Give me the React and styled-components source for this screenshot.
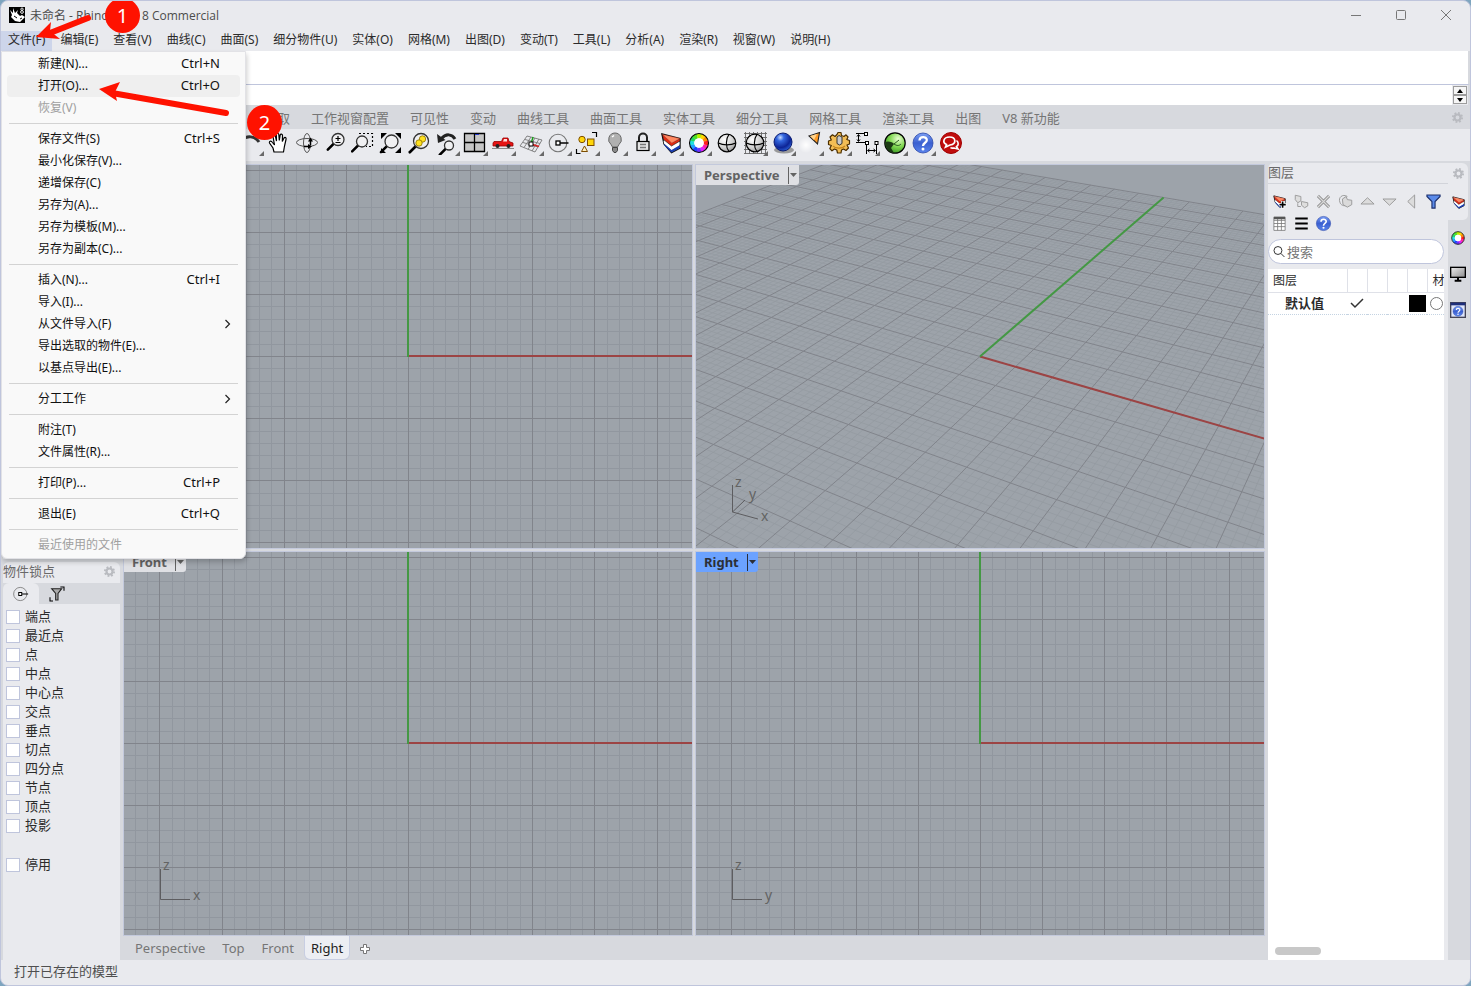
import React from 'react';
import styled, { createGlobalStyle } from 'styled-components';

const GlobalStyle = createGlobalStyle`
  * {
    box-sizing: border-box;
  }
  body {
    margin: 0;
    background: #7ea5bf;
    font-family: "Noto Sans", "Noto Sans CJK SC", sans-serif;
    font-size: 12px;
    color: #2b2b2b;
  }
  button, input {
    font: inherit;
    color: inherit;
  }
  button {
    border: 0;
    padding: 0;
    background: none;
  }
  svg {
    display: block;
  }
`;

const Window = styled.div`
  position: relative;
  display: flex;
  flex-direction: column;
  min-height: 100vh;
  border: 1px solid #bfc5dc;
  border-radius: 8px;
  background: #e9eaee;
  overflow: hidden;
`;

const TitleBar = styled.header`
  display: flex;
  align-items: center;
  height: 30px;
  padding: 0 8px 2px;
  gap: 5px;
  color: #4c4c4c;
`;

const Title = styled.h1`
  flex: 1;
  margin: 0;
  font-family: "Open Sans", "Noto Sans CJK SC", sans-serif;
  font-size: 12px;
  font-weight: 400;
`;

const WindowButtons = styled.div`
  display: flex;
  gap: 29px;
  padding-right: 8px;
`;

const WindowButton = styled.button`
  width: 16px;
  height: 16px;
`;

const MenuBar = styled.nav`
  display: flex;
  gap: 1px;
  height: 20px;
`;

const MenuTitle = styled.button`
  height: 20px;
  padding: 0 7px 2px;
  line-height: 16px;
  white-space: nowrap;
  background: ${props => props.$open ? '#cdd5ea' : 'none'};
`;

const History = styled.div`
  height: 34px;
  background: white;
  border-bottom: 1px solid #bfc5dc;
  border-right: 2px solid #d7d9de;
`;

const Prompt = styled.div`
  display: flex;
  height: 20px;
  background: white;
  border-right: 2px solid #d7d9de;
`;

const PromptInput = styled.input`
  flex: 1;
  border: 0;
  outline: 0;
  padding: 0 4px;
`;

const Spinner = styled.div`
  display: flex;
  flex-direction: column;
  width: 16px;
  padding: 1px;
  background: #e9eaee;
`;

const SpinButton = styled.button`
  display: flex;
  align-items: center;
  justify-content: center;
  height: 9px;
  border: 1px solid #9c9c9c;
  background: #f6f6f6;
`;

const ToolTabs = styled.div`
  display: flex;
  align-items: center;
  gap: 21px;
  height: 24px;
  padding: 0 6px 0 263px;
  background: #d7d9de;
  color: #757575;
  font-size: 13px;
`;

const ToolTab = styled.button`
  line-height: 20px;
  padding-top: 2px;
  white-space: nowrap;
`;

const Push = styled.span`
  margin-left: auto;
`;

const Toolbar = styled.div`
  display: flex;
  height: 32px;
  padding: 0 0 4px 236px;
`;

const Tool = styled.button`
  position: relative;
  display: flex;
  align-items: center;
  justify-content: center;
  flex: none;
  width: 28px;
  height: 28px;
  &::after {
    content: "";
    display: ${props => props.$more ? 'block' : 'none'};
    position: absolute;
    right: 1px;
    bottom: 1px;
    border-left: 5px solid transparent;
    border-bottom: 5px solid #696969;
  }
`;

const Main = styled.main`
  display: flex;
  flex: 1;
  background: #d7d9de;
`;

const LeftDock = styled.aside`
  display: grid;
  grid-template-rows: 1fr 1fr;
  gap: 3px;
  width: 119px;
  padding-left: 2px;
`;

const DockPanel = styled.section`
  border-radius: 6px 6px 0 0;
  background: #e9eaee;
  overflow: hidden;
`;

const PanelTitle = styled.header`
  display: flex;
  align-items: center;
  justify-content: space-between;
  height: 21px;
  padding: 0 4px 2px 0;
  font-size: 13px;
  line-height: 19px;
  color: #696969;
`;

const PanelTabs = styled.div`
  display: flex;
  height: 21px;
  background: #d7d9de;
`;

const PanelTab = styled.button`
  display: flex;
  align-items: center;
  justify-content: center;
  width: 36px;
  border-radius: 6px 6px 0 0;
  background: ${props => props.$active ? '#e9eaee' : 'none'};
`;

const SnapList = styled.div`
  display: flex;
  flex-direction: column;
  padding: 3px;
`;

const Snap = styled.label`
  display: flex;
  align-items: center;
  gap: 5px;
  height: 19px;
  margin-top: ${props => props.$apart ? '20px' : '0'};
  font-size: 13px;
  line-height: 19px;
`;

const Check = styled.input`
  appearance: none;
  width: 14px;
  height: 14px;
  margin: 0;
  border: 1px solid #bfc5dc;
  background: white;
`;

const ViewArea = styled.div`
  display: flex;
  flex-direction: column;
  flex: 1;
  min-width: 0;
  padding-top: 4px;
`;

const Views = styled.div`
  display: grid;
  flex: 1;
  grid-template-columns: 1fr 1fr;
  grid-template-rows: 1fr 1fr;
  gap: 4px;
  padding: 0 4px;
`;

const View = styled.section`
  position: relative;
  min-height: 240px;
  background: #9da3aa;
  outline: 1px solid #c3c9dc;
  overflow: hidden;
`;

const Canvas = styled.svg`
  position: absolute;
  inset: 0;
  width: 100%;
  height: 100%;
`;

const ViewLabel = styled.button`
  position: absolute;
  top: 0;
  left: 0;
  display: flex;
  align-items: center;
  height: 20px;
  padding: 0 1px 0 8px;
  gap: 8px;
  border-radius: 0 0 3px 0;
  font-size: 13px;
  font-weight: 700;
  line-height: 20px;
  color: ${props => props.$active ? '#2b2f38' : '#636363'};
  background: ${props => props.$active ? '#6ba2ff' : '#dfe0e4'};
`;

const Caret = styled.span`
  display: flex;
  align-items: center;
  height: 17px;
  border-left: 1px solid currentColor;
`;

const ViewTabs = styled.div`
  display: flex;
  height: 25px;
  padding: 1px 9px;
  font-size: 13px;
  color: #757575;
`;

const ViewTab = styled.button`
  height: 23px;
  padding: 2px 6px 0;
  margin-right: 5px;
  line-height: 21px;
  border-radius: 0 0 5px 5px;
  color: ${props => props.$active ? '#222222' : 'inherit'};
  background: ${props => props.$active ? '#eceef3' : 'none'};
  box-shadow: ${props => props.$active ? '0 0 0 1px #c8cee2' : 'none'};
`;

const RightDock = styled.aside`
  display: flex;
  width: 202px;
  padding: 2px 2px 0 0;
`;

const LayerPanel = styled.section`
  display: flex;
  flex-direction: column;
  flex: 1;
  min-width: 0;
  padding-right: 4px;
  background: #e9eaee;
  border-top-left-radius: 6px;
`;

const LayerTitle = styled(PanelTitle)`
  margin-right: -4px;
  border-bottom: 1px solid #d2d4da;
`;

const LayerTools = styled.div`
  display: flex;
  flex-wrap: wrap;
  padding: 6px 0 3px;
`;

const LayerTool = styled.button`
  display: flex;
  align-items: center;
  justify-content: center;
  width: 22px;
  height: 22px;
`;

const Search = styled.label`
  display: flex;
  align-items: center;
  gap: 2px;
  height: 25px;
  margin: 2px 0 5px;
  padding: 0 4px;
  border: 1px solid #bfc5dc;
  border-radius: 13px;
  background: white;
`;

const SearchInput = styled.input`
  width: 100%;
  border: 0;
  outline: 0;
  padding: 0;
  font-size: 13px;
  background: none;
  &::placeholder {
    color: #757575;
  }
`;

const LayerList = styled.div`
  display: flex;
  flex-direction: column;
  justify-content: space-between;
  flex: 1;
  background: white;
  overflow: hidden;
`;

const LayerTable = styled.table`
  width: 100%;
  table-layout: fixed;
  border-collapse: collapse;
  th {
    height: 23px;
    padding: 0 0 0 5px;
    font-weight: 400;
    text-align: left;
    white-space: nowrap;
    overflow: hidden;
    border-right: 1px solid #dfe1e8;
    border-bottom: 1px solid #dfe1e8;
  }
  th:last-child {
    border-right: 0;
  }
  td {
    height: 22px;
    padding: 0;
    border-bottom: 1px dotted #c4d3e2;
  }
`;

const LayerName = styled.td`
  && {
    padding-left: 17px;
    font-size: 13px;
    font-weight: 700;
    line-height: 20px;
  }
`;

const Swatch = styled.span`
  display: block;
  width: 17px;
  height: 17px;
  margin-left: 2px;
  background: black;
`;

const Material = styled.span`
  display: block;
  width: 13px;
  height: 13px;
  margin-left: 3px;
  border: 1px solid #777777;
  border-radius: 50%;
`;

const Thumb = styled.div`
  width: 46px;
  height: 8px;
  margin: 0 0 5px 7px;
  border-radius: 4px;
  background: #c8c8c8;
`;

const SideTabs = styled.div`
  display: flex;
  flex-direction: column;
  width: 20px;
`;

const SideTab = styled.button`
  display: flex;
  align-items: center;
  justify-content: center;
  height: 36px;
  background: ${props => props.$active ? '#e9eaee' : 'none'};
  border-radius: ${props => props.$active ? '0 0 5px 0' : '0'};
`;

const SideHead = styled.div`
  display: flex;
  align-items: center;
  justify-content: center;
  height: 21px;
  border-top-right-radius: 6px;
  background: #e9eaee;
`;

const StatusBar = styled.footer`
  height: 25px;
  padding: 0 13px;
  font-size: 13px;
  line-height: 22px;
  color: #4f4f4f;
`;

const Menu = styled.div`
  position: absolute;
  top: 50px;
  left: 0;
  width: 245px;
  padding: 1px 5px 2px;
  border: 1px solid #e2e2e6;
  border-radius: 0 0 6px 6px;
  background: #f9f9f9;
  box-shadow: 1px 3px 5px rgba(0, 0, 0, 0.2);
`;

const MenuItem = styled.button`
  display: flex;
  align-items: center;
  width: 100%;
  height: 22px;
  padding: 0 9px 0 31px;
  border-radius: 4px;
  line-height: 22px;
  text-align: left;
  color: ${props => props.$disabled ? '#a0a0a0' : '#111111'};
  background: ${props => props.$hover ? '#efefef' : 'none'};
`;

const MenuText = styled.span`
  flex: 1;
`;

const Shortcut = styled.kbd`
  height: 22px;
  padding-right: 11px;
  font-family: inherit;
  font-size: 13px;
  line-height: 20px;
`;

const Separator = styled.hr`
  height: 1px;
  margin: 4px 2px;
  border: 0;
  background: #d3d3d3;
`;

const Notes = styled.svg`
  position: absolute;
  top: -1px;
  left: -1px;
  pointer-events: none;
`;

const Badge = styled.span`
  position: absolute;
  left: ${props => props.$x}px;
  top: ${props => props.$y}px;
  width: 35px;
  height: 35px;
  border-radius: 50%;
  background: #ff1200;
  color: white;
  font-size: 20px;
  line-height: 36px;
  text-align: center;
`;

const menus = ['文件(F)', '编辑(E)', '查看(V)', '曲线(C)', '曲面(S)', '细分物件(U)', '实体(O)', '网格(M)', '出图(D)', '变动(T)', '工具(L)', '分析(A)', '渲染(R)', '视窗(W)', '说明(H)'];

const fileMenu = [
  { text: '新建(N)...', keys: 'Ctrl+N' },
  { text: '打开(O)...', keys: 'Ctrl+O', hover: true },
  { text: '恢复(V)', disabled: true },
  null,
  { text: '保存文件(S)', keys: 'Ctrl+S' },
  { text: '最小化保存(V)...' },
  { text: '递增保存(C)' },
  { text: '另存为(A)...' },
  { text: '另存为模板(M)...' },
  { text: '另存为副本(C)...' },
  null,
  { text: '插入(N)...', keys: 'Ctrl+I' },
  { text: '导入(I)...' },
  { text: '从文件导入(F)', sub: true },
  { text: '导出选取的物件(E)...' },
  { text: '以基点导出(E)...' },
  null,
  { text: '分工工作', sub: true },
  null,
  { text: '附注(T)' },
  { text: '文件属性(R)...' },
  null,
  { text: '打印(P)...', keys: 'Ctrl+P' },
  null,
  { text: '退出(E)', keys: 'Ctrl+Q' },
  null,
  { text: '最近使用的文件', disabled: true },
];

const toolTabs = ['选取', '工作视窗配置', '可见性', '变动', '曲线工具', '曲面工具', '实体工具', '细分工具', '网格工具', '渲染工具', '出图', 'V8 新功能'];

const snaps = ['端点', '最近点', '点', '中点', '中心点', '交点', '垂点', '切点', '四分点', '节点', '顶点', '投影'];

const wheelColors = ['#ffd800', '#ff8a00', '#ff2020', '#ff20a0', '#e020ff', '#7030ff', '#2040ff', '#20a0ff', '#20e0e0', '#20d860', '#50e020', '#b8f000'];

function Icon({size = 24, box = 24, children}) {
  return <svg width={size} height={size} viewBox={`0 0 ${box} ${box}`} fill="none" stroke="#000" aria-hidden="true">{children}</svg>;
}

function Defs() {
  return (
    <svg width="0" height="0" style={{ position: 'absolute' }} aria-hidden="true">
      <defs>
        <radialGradient id="ballBlue" cx=".35" cy=".25" r=".8"><stop offset="0" stopColor="#c8dcff" /><stop offset=".25" stopColor="#3468e0" /><stop offset=".7" stopColor="#0d2496" /><stop offset="1" stopColor="#2c62d8" /></radialGradient>
        <radialGradient id="ballGreen" cx=".65" cy=".3" r=".8"><stop offset="0" stopColor="#e8ffd0" /><stop offset=".5" stopColor="#7fd650" /><stop offset="1" stopColor="#2c8a1c" /></radialGradient>
        <radialGradient id="ballGray" cx=".35" cy=".3" r=".8"><stop offset="0" stopColor="#ffffff" /><stop offset=".6" stopColor="#d0d0d0" /><stop offset="1" stopColor="#8d8d8d" /></radialGradient>
        <linearGradient id="help" x1="0" y1="0" x2="0" y2="1"><stop offset="0" stopColor="#7da0f4" /><stop offset=".5" stopColor="#3a5fd0" /><stop offset="1" stopColor="#5a84ec" /></linearGradient>
        <linearGradient id="screen" x1="0" y1="0" x2="1" y2="1"><stop offset="0" stopColor="#eeeeee" /><stop offset="1" stopColor="#8c8c8c" /></linearGradient>
        <radialGradient id="glow"><stop offset="0" stopColor="#ffffff" /><stop offset="1" stopColor="#ffffff" stopOpacity="0" /></radialGradient>
      </defs>
    </svg>
  );
}

function Lens({x = 14, y = 10, r = 6}) {
  const k = r * 0.7;
  return (
    <>
      <path d={`M${x - k} ${y + k} L${x - k - 6} ${y + k + 6}`} strokeWidth="2.6" strokeLinecap="round" />
      <circle cx={x} cy={y} r={r} fill="#f0f0f2" stroke="#333" strokeWidth="1.3" />
    </>
  );
}

function Wheel() {
  return wheelColors.map((color, i) => {
    const a = (i * 30 - 75) * Math.PI / 180;
    const b = (i * 30 - 43) * Math.PI / 180;
    return <path key={color} d={`M${12 + 7 * Math.cos(a)} ${12 + 7 * Math.sin(a)} A7 7 0 0 1 ${12 + 7 * Math.cos(b)} ${12 + 7 * Math.sin(b)}`} stroke={color} strokeWidth="4.6" />;
  });
}

const wheel = (
  <>
    <Wheel />
    <circle cx="12" cy="12" r="9.5" strokeWidth="1.1" />
    <circle cx="12" cy="12" r="4.8" fill="#fff" stroke="none" />
  </>
);

const wedge = (
  <>
    <path d="M3 3 L5 13 L12.500 21.500 L21 17 V7.500 Z" fill="#fff" stroke="#111" strokeWidth="1.400" />
    <path d="M5 12 L12.500 19 L21 14 V17 L12.500 21.500 L5.500 14.500 Z" fill="#1b3fb0" stroke="none" />
    <path d="M4.500 9.500 L12.500 16 L20.500 11 V13.500 L12.500 18.500 L5 12.500 Z" fill="#fff" stroke="none" />
    <path d="M3 3 L4.500 8.500 L12.500 15 L21 10 V7.500 L13 11.500 Z" fill="#e22a12" stroke="#111" strokeWidth=".6" />
    <path d="M3.500 3.500 L20.500 7.500 L12.800 12 Z" fill="#ff8a62" stroke="#c43" strokeWidth=".4" />
  </>
);

const helpBall = (
  <>
    <circle cx="12" cy="12" r="10" fill="url(#help)" stroke="#2845a8" strokeWidth=".8" />
    <path d="M8.500 9.500 C8.500 5 15.800 5 15.800 9 C15.800 12 12 11.500 12 15" stroke="#fff" strokeWidth="2.300" />
    <circle cx="12" cy="18" r="1.500" fill="#fff" stroke="none" />
  </>
);

const wireBall = (
  <>
    <circle cx="12" cy="12" r="8.800" fill="url(#ballGray)" strokeWidth="1.200" />
    <path d="M14 3.400 C10.500 8 10.500 16 14 20.600 M3.300 12 C8 14.500 16 14.500 20.700 12" strokeWidth="1.100" />
  </>
);

const snapTarget = (
  <>
    <circle cx="11" cy="12" r="8.800" stroke="#777" strokeWidth="1.100" />
    <path d="M12.500 12 H21.500" strokeWidth="1.400" />
    <rect x="9" y="10" width="4" height="4" fill="#fff" strokeWidth="1.300" />
  </>
);

const gear = (
  <>
    <circle cx="12" cy="12" r="5.500" strokeWidth="4" />
    <circle cx="12" cy="12" r="8.500" strokeWidth="3.500" strokeDasharray="3.340 3.340" />
  </>
);

const cog = 'M10 3.500 L11 1.500 H14 L14.500 4.500 L17 5.500 L19 3.800 L21 6 L19.800 8.500 L22.500 9.500 V13 L20 14 L21.500 17 L19 19.500 L16.500 18 L14.500 19 L14 22 H10.500 L9.800 19 L7.500 18 L5 19.800 L2.800 17.500 L4.300 14.500 L1.500 13.500 V10 L4.300 9 L3 6 L5.500 3.800 L8 5.500 Z';

const tools = [
  { id: '重做', more: true, art: <path d="M3 9 C8 4 16 5 20 11" stroke="#333" strokeWidth="3" /> },
  { id: '平移', art: <path d="M7 21 L6 17 L2.500 12 C2 10 4 9.500 5.500 11.500 L7.500 14 L6 5.500 C6 3.500 8 3.500 8.500 5.500 L9.500 10 L9.300 3.500 C9.500 1.800 11.600 1.800 11.800 3.500 L12.300 9.500 L13.200 4 C13.600 2.500 15.500 2.800 15.500 4.500 L15.300 10.500 L17 7 C18 5.800 19.500 6.600 19 8.500 L17.500 15 L16.500 21 Z" fill="#fff" strokeWidth="1.200" /> },
  { id: '旋转', art: <><ellipse cx="12" cy="11.500" rx="10.500" ry="4" stroke="#555" /><ellipse cx="12" cy="12" rx="3.500" ry="9.500" stroke="#555" /><path d="M9 15.500 H14 M15.500 8 V14" strokeWidth="1.500" /><path d="M17 15.500 l-4 -2.500 v5 Z M15.500 6.500 l-2.500 4 h5 Z" fill="#000" stroke="none" /></> },
  { id: '缩放', art: <><Lens x={15} y={8.5} /><path d="M12.500 7.500 h5 M15 5 v5 M12.500 11.500 h5" strokeWidth="1.200" /></> },
  { id: '框选缩放', art: <><path d="M8 2.500 H21.500 V15.500 H15" strokeDasharray="2 2" strokeWidth="1.200" /><Lens x={11} y={10.5} r={5.500} /></> },
  { id: '缩放至范围', art: <><path d="M2 2 h6 l-6 6 Z M22 2 h-6 l6 6 Z M22 22 h-6 l6 -6 Z M2 22 h5 l-5 -5 Z" fill="#000" stroke="none" /><Lens x={12.5} y={10.5} r={6.500} /></> },
  { id: '缩放至选取', art: <><Lens x={14} y={10} r={7.500} /><circle cx="15.500" cy="8" r="3.200" fill="#ffe11f" stroke="#8c7000" strokeWidth=".8" /><circle cx="12" cy="12" r="3.200" fill="#ffe11f" stroke="#8c7000" strokeWidth=".8" /></> },
  { id: '复原视图', more: true, art: <><Lens x={14} y={14.5} r={4.500} /><path d="M6 8 C11 2 17 3 20 8" strokeWidth="3" stroke="#222" /><path d="M2 3 L3 12 L10.500 9 Z" fill="#222" stroke="none" /></> },
  { id: '四个工作视窗', more: true, art: <><path d="M1.500 2.500 h20 v18 h-20 Z M11.500 2.500 v18 M1.500 11.500 h20" fill="#c6c6c6" strokeWidth="1.300" /><path d="M12 3.500 h4" stroke="#2438c8" /></> },
  { id: '车辆', more: true, art: <><path d="M2 12 L3 10.500 H10.500 L12 7 H17 L18 10.500 L22 12 V15 H2 Z" fill="#e61414" stroke="#9a0000" strokeWidth=".8" /><path d="M12 10.500 L13 8 H16 V10.500 Z" fill="#ffe0e0" stroke="none" /><circle cx="6.500" cy="15" r="2" fill="#222" stroke="none" /><circle cx="17.500" cy="15" r="2" fill="#222" stroke="none" /><path d="M1 17.500 h22" stroke="#888" /></> },
  { id: '工作平面', more: true, art: <><path d="M8 5 L23 9 L16 21 L1 15 Z M12 6 L5 16.500 M16 7 L9 18.500 M20 8 L13 20 M6 8.500 L21 12.500 M4 11.500 L19 16" stroke="#777" strokeWidth=".9" /><path d="M12 13 L14 6" stroke="#19a019" strokeWidth="1.500" /><path d="M12 13 L20 15.500" stroke="#d81f1f" strokeWidth="1.600" /><rect x="10" y="11" width="4" height="4" fill="#fff" /></> },
  { id: '物件锁点', more: true, art: snapTarget },
  { id: '选取物件', more: true, art: <><path d="M17 1.500 h4.500 V6 M1.500 18 v4.500 h4" strokeWidth="1.200" /><g fill="#ffd60a" stroke="#7d4c00"><circle cx="7" cy="8.500" r="3.200" /><rect x="12.500" y="8" width="6.500" height="6.500" /><path d="M9.500 15 l3 5.500 h-6 Z" fill="#fff1c0" /></g></> },
  { id: '隐藏物件', more: true, art: <><path d="M12 2 a6.500 6.500 0 0 1 4 11.500 L14.500 16 h-5 L8 13.500 A6.500 6.500 0 0 1 12 2 Z" fill="#b0b0b0" stroke="#666" /><path d="M9.500 16.500 h5 v3 l-1.500 2 h-2 l-1.500 -2 Z" fill="#888" stroke="#444" /><path d="M9 6 l2 -1.500" stroke="#fff" strokeWidth="1.500" /></> },
  { id: '锁定物件', more: true, art: <><path d="M8 11 V6.500 a4 4 0 0 1 8 0 V11" strokeWidth="2" stroke="#222" /><rect x="6" y="10.500" width="12" height="9" fill="#e4e4e4" strokeWidth="1.200" /><path d="M9 13.500 h6 M9 16.500 h6" stroke="#777" strokeWidth="1.500" /></> },
  { id: '图层', more: true, art: wedge },
  { id: '颜色', more: true, art: wheel },
  { id: '着色', art: wireBall },
  { id: '半透明', more: true, art: <><path d="M2.500 1 v22 M6.500 1 v22 M10.500 1 v22 M14.500 1 v22 M18.500 1 v22 M22.500 1 v22 M1 2.500 h23 M1 6.500 h23 M1 10.500 h23 M1 14.500 h23 M1 18.500 h23 M1 22.500 h23" stroke="#666" strokeWidth=".9" />{wireBall}</> },
  { id: '渲染', more: true, art: <><ellipse cx="13" cy="19" rx="10" ry="3.500" fill="#9a9a9a" stroke="none" /><circle cx="12" cy="11" r="9" fill="url(#ballBlue)" stroke="#0b1c70" /></> },
  { id: '聚光灯', more: true, art: <><circle cx="7" cy="14" r="8" fill="url(#glow)" stroke="none" /><path d="M10 5 L20.500 1.500 L18.500 13 Z" fill="#ff9a24" stroke="#222" strokeWidth="1.100" /><path d="M11 5 L18 3 L15 9 Z" fill="#ffd38c" stroke="none" /></> },
  { id: '选项', more: true, art: <><path d={cog} fill="#f2bd55" stroke="#4b2e00" strokeWidth="1.200" strokeLinejoin="round" /><path d="M10 6 L12 4.500 L15 6 V12.500 L12.500 14 L10 12.500 Z" fill="#c9c9c9" stroke="#333" /><path d="M6 15 C8 17.500 15 18 18 15" stroke="#c58418" strokeWidth="1.200" /></> },
  { id: '尺寸标注', more: true, art: <><path d="M1 2.500 h8 M1 11.500 h9 M3.500 4 v6 M2 5.500 l1.500 -2 l1.500 2 M2 8.500 l1.500 2 l1.500 -2 M11.500 14 v9 M21.500 14 v9 M13 19.500 h7 M14.500 18 l-2 1.500 l2 1.500 M18.500 18 l2 1.500 l-2 1.500" /><g fill="#fff"><rect x="9.500" y="1.500" width="3" height="3" /><rect x="10.500" y="10.500" width="3" height="3" /><rect x="20" y="10.500" width="3" height="3" /></g></> },
  { id: '动画', more: true, art: <><circle cx="12" cy="12" r="10.200" fill="url(#ballGreen)" strokeWidth="1.200" /><path d="M2 11 C5 9.500 10 11 11 13 L8 17 L11 22 C6 22 2 17 2 11 Z" fill="#1c3a14" stroke="none" /><path d="M11 13 L16 9 M11 13 C14 15 16 15 18 13" stroke="#2c5a20" /></> },
  { id: '说明', more: true, art: helpBall },
  { id: '论坛', art: <><circle cx="12" cy="12" r="10.500" fill="#c00d0d" stroke="#a00000" /><path d="M7.500 13.500 C3 11.500 4.500 6 10.500 6 C17 6 18 13 11 14 L6.500 16 Z" stroke="#fff" strokeWidth="1.700" /><path d="M17.500 9.500 C20 11.500 19.500 14.500 17.500 15.500 L19 18 L15 17 C13.500 17.200 12 17 11.500 16.500" stroke="#fff" strokeWidth="1.600" /></> },
];

const layerTools = [
  { id: '新图层', art: <>{wedge}<path d="M17 11 v12 M11 17 h12" stroke="#fff" strokeWidth="5" /><path d="M17 12 v10 M12 17 h10" strokeWidth="2.600" /></> },
  { id: '新子图层', art: <g stroke="#9a9a9a" strokeWidth="1.500" fill="#dedede"><path d="M2 2 L11 4 V11 L6 14 L2 9 Z M12 12 L22 14 V19 L17 22 L12 18 Z" /><path d="M6 15 v5 h5" fill="none" /></g> },
  { id: '删除', art: <><path d="M3 3 L21 21 M21 3 L3 21" stroke="#989898" strokeWidth="5" /><path d="M3 3 L21 21 M21 3 L3 21" stroke="#d9d9d9" strokeWidth="2" /></> },
  { id: '复制', art: <g stroke="#999" strokeWidth="1.500" fill="#dadada"><path d="M15 4 C7 -1 0 6 3 13 C4 18 10 20 14 18" fill="none" /><path d="M7 8 L13 4 L15 9 L22 10 V17 L15 21 L8 17 Z" /></g> },
  { id: '上移', art: <path d="M1.500 16 L12 6 L22.500 16 Z" fill="#dcdcdc" stroke="#999" strokeWidth="1.500" /> },
  { id: '下移', art: <path d="M1.500 8 L12 18 L22.500 8 Z" fill="#dcdcdc" stroke="#999" strokeWidth="1.500" /> },
  { id: '上一级', art: <path d="M17 1.500 V22.500 L6 12 Z" fill="#dcdcdc" stroke="#999" strokeWidth="1.500" /> },
  { id: '过滤器', art: <path d="M1.500 1.500 H22.500 V4 L14.500 12 V22.500 H9.500 V12 L1.500 4 Z" fill="#5b8bea" stroke="#1c2f6b" strokeWidth="1.800" /> },
  { id: '列', art: <><path d="M3 2 H21 V23 H3 Z M9 2 V23 M15 2 V23 M3 7 H21 M3 12 H21 M3 17 H21" stroke="#777" strokeWidth="1.300" fill="#fff" /><path d="M3 3 H21" stroke="#555" strokeWidth="4" /></> },
  { id: '菜单', art: <path d="M2 4 H22 M2 12 H22 M2 20 H22" strokeWidth="3" /> },
  { id: '说明', art: helpBall },
];

// Pinhole camera aimed at the origin, one unit per major grid square.
function project(x, y) {
  const depth = 1 - 0.02165 * x + 0.0375 * y;
  const px = (34.64 * x + 20 * y) / depth;
  const py = (10 * x - 17.32 * y) / depth;
  return px.toFixed(1) + ' ' + py.toFixed(1);
}

function perspectiveLines(major) {
  let d = '';
  for (let i = -70; i <= 70; i++) {
    if ((i % 5 === 0) !== major) continue;
    const t = i / 5;
    d += `M${project(t, -14)} L${project(t, 14)} M${project(-14, t)} L${project(14, t)} `;
  }
  return d;
}

function flatLines(major) {
  let d = '';
  for (let i = -70; i <= 70; i++) {
    if ((i % 5 === 0) !== major) continue;
    const p = Math.round(i * 12.43);
    d += `M${p} -870 V870 M-870 ${p} H870 `;
  }
  return d;
}

const grids = {
  flat: { minor: flatLines(false), major: flatLines(true), red: 'M0 -1 H870', green: 'M0 0 V-870' },
  persp: { minor: perspectiveLines(false), major: perspectiveLines(true), red: `M0 0 L${project(14, 0)}`, green: `M0 0 L${project(0, 14)}` },
};

function CaretIcon() {
  return <svg width="9" height="6" viewBox="0 0 9 6" aria-hidden="true"><path d="M1 1 H8 L4.500 5 Z" fill="currentColor" /></svg>;
}

function Viewport({name, active, across, persp}) {
  const grid = persp ? grids.persp : grids.flat;
  const crisp = persp ? 'auto' : 'crispEdges';

  return (
    <View>
      <Canvas>
        <svg x="50%" y="50%" overflow="visible" fill="none" shapeRendering={crisp}>
          <path d={grid.minor} stroke={persp ? '#949aa1' : '#91979f'} strokeWidth={persp ? 0.8 : 1} />
          <path d={grid.major} stroke="#81848b" />
          <path d={grid.red} stroke="#9c4444" strokeWidth="2" />
          <path d={grid.green} stroke="#449844" strokeWidth="2" />
        </svg>
        {across && (
          <svg y="100%" overflow="visible" fontSize="14" fill="#636363">
            <path d={persp ? 'M36.500 -63 V-36 L62 -29 M36.500 -36 L49 -48' : 'M36.500 -66 V-35.500 H66'} fill="none" stroke="#5d5d60" />
            <text x="39" y={persp ? -61 : -65}>z</text>
            {persp && <text x="53" y="-49">y</text>}
            <text x={persp ? 65 : 69} y={persp ? -27 : -35}>{across}</text>
          </svg>
        )}
      </Canvas>
      <ViewLabel $active={active}>
        {name}
        <Caret><CaretIcon /></Caret>
      </ViewLabel>
    </View>
  );
}

function FileMenu() {
  return (
    <Menu>
      {fileMenu.map((item, i) => item ? (
        <MenuItem key={i} $hover={item.hover} $disabled={item.disabled} disabled={item.disabled}>
          <MenuText>{item.text}</MenuText>
          {item.keys && <Shortcut>{item.keys}</Shortcut>}
          {item.sub && <svg width="7" height="10" viewBox="0 0 7 10" fill="none" stroke="#222" aria-hidden="true"><path d="M1.500 1 L5.500 5 L1.500 9" strokeWidth="1.200" /></svg>}
        </MenuItem>
      ) : <Separator key={i} />)}
    </Menu>
  );
}

function Layers() {
  return (
    <RightDock>
      <LayerPanel>
        <LayerTitle>图层</LayerTitle>
        <LayerTools>
          {layerTools.map(tool => (
            <LayerTool key={tool.id} aria-label={tool.id}><Icon size={tool.id === '说明' ? 17 : 15}>{tool.art}</Icon></LayerTool>
          ))}
        </LayerTools>
        <Search>
          <Icon size={13} box={12}><circle cx="5" cy="5" r="4" stroke="#333" /><path d="M8 8 L11.500 11.500" stroke="#333" /></Icon>
          <SearchInput placeholder="搜索" aria-label="搜索" />
        </Search>
        <LayerList>
          <LayerTable>
            <colgroup>
              <col />
              <col width="20" />
              <col width="20" />
              <col width="20" />
              <col width="20" />
              <col width="17" />
            </colgroup>
            <thead>
              <tr><th>图层</th><th /><th /><th /><th /><th>材</th></tr>
            </thead>
            <tbody>
              <tr>
                <LayerName>默认值</LayerName>
                <td><Icon size={18} box={18}><path d="M4 9 L8 13 L16 5" stroke="#333" strokeWidth="1.500" /></Icon></td>
                <td />
                <td />
                <td><Swatch /></td>
                <td><Material /></td>
              </tr>
            </tbody>
          </LayerTable>
          <Thumb />
        </LayerList>
      </LayerPanel>
      <SideTabs>
        <SideHead><Icon size={13}><g stroke="#b9bbc0">{gear}</g></Icon></SideHead>
        <SideTab $active aria-label="图层"><Icon size={15}>{wedge}</Icon></SideTab>
        <SideTab aria-label="材质"><Icon size={16}>{wheel}</Icon></SideTab>
        <SideTab aria-label="显示"><Icon size={16}><rect x="1" y="2" width="22" height="15" fill="url(#screen)" strokeWidth="2" /><path d="M12 18 v4 M7 22 h10" strokeWidth="3" /></Icon></SideTab>
        <SideTab aria-label="说明"><Icon size={16}><rect x="1" y="1" width="22" height="22" fill="#dfe6fa" stroke="#445" strokeWidth="2" /><path d="M1 3 h22" stroke="#1f2f7a" strokeWidth="4" /><g transform="translate(3 5) scale(.75)">{helpBall}</g></Icon></SideTab>
      </SideTabs>
    </RightDock>
  );
}

export default function App() {

  return (
    <Window>
      <GlobalStyle />
      <Defs />
      <TitleBar>
        <Icon size={16} box={16}>
          <rect width="16" height="16" fill="#000" stroke="none" />
          <path d="M1 3 L3 8 L2 10 L6 14 L11 15 L16 10 L13 8 L11 9 L8 6 L9 3 L6 6 L4 1 L4 6 Z" fill="#fff" stroke="none" />
          <path d="M5 9 L8 11 M11 12 L13 11" stroke="#000" />
          <circle cx="13" cy="2.200" r="1.200" stroke="#fff" strokeWidth=".9" />
          <circle cx="13" cy="5" r="1.400" stroke="#fff" strokeWidth=".9" />
        </Icon>
        <Title>未命名 - Rhinoceros 8 Commercial</Title>
        <WindowButtons>
          <WindowButton aria-label="最小化"><Icon size={16} box={16}><path d="M3 8.500 H13" stroke="#777" /></Icon></WindowButton>
          <WindowButton aria-label="最大化"><Icon size={16} box={16}><rect x="3.500" y="3.500" width="9" height="9" rx="1" stroke="#777" /></Icon></WindowButton>
          <WindowButton aria-label="关闭"><Icon size={16} box={16}><path d="M3 3 L13 13 M13 3 L3 13" stroke="#777" /></Icon></WindowButton>
        </WindowButtons>
      </TitleBar>
      <MenuBar>
        {menus.map((text, i) => <MenuTitle key={text} $open={i === 0}>{text}</MenuTitle>)}
      </MenuBar>
      <History />
      <Prompt>
        <PromptInput aria-label="指令" />
        <Spinner>
          <SpinButton aria-label="上一条"><svg width="6" height="4"><path d="M0 4 L3 0 L6 4 Z" /></svg></SpinButton>
          <SpinButton aria-label="下一条"><svg width="6" height="4"><path d="M0 0 L3 4 L6 0 Z" /></svg></SpinButton>
        </Spinner>
      </Prompt>
      <ToolTabs>
        {toolTabs.map(text => <ToolTab key={text}>{text}</ToolTab>)}
        <Push><Icon size={13}><g stroke="#b9bbc0">{gear}</g></Icon></Push>
      </ToolTabs>
      <Toolbar>
        {tools.map(tool => (
          <Tool key={tool.id} $more={tool.more} aria-label={tool.id}><Icon>{tool.art}</Icon></Tool>
        ))}
      </Toolbar>
      <Main>
        <LeftDock>
          <DockPanel />
          <DockPanel>
            <PanelTitle>
              物件锁点
              <Icon size={13}><g stroke="#b9bbc0">{gear}</g></Icon>
            </PanelTitle>
            <PanelTabs>
              <PanelTab $active aria-label="物件锁点"><Icon size={18}>{snapTarget}</Icon></PanelTab>
              <PanelTab aria-label="选取过滤器"><Icon size={16}><path d="M4 4 H19 L13.500 11 V21 H10 V11 Z" fill="#aaa" stroke="#222" strokeWidth="1.600" /><path d="M17 1.500 H22.500 V7 M1.500 17 V22.500 H6" strokeWidth="1.600" /></Icon></PanelTab>
            </PanelTabs>
            <SnapList>
              {snaps.map(text => <Snap key={text}><Check type="checkbox" />{text}</Snap>)}
              <Snap $apart><Check type="checkbox" />停用</Snap>
            </SnapList>
          </DockPanel>
        </LeftDock>
        <ViewArea>
          <Views>
            <Viewport name="Top" />
            <Viewport name="Perspective" across="x" persp />
            <Viewport name="Front" across="x" />
            <Viewport name="Right" across="y" active />
          </Views>
          <ViewTabs>
            <ViewTab>Perspective</ViewTab>
            <ViewTab>Top</ViewTab>
            <ViewTab>Front</ViewTab>
            <ViewTab $active>Right</ViewTab>
            <ViewTab aria-label="新建工作视窗"><Icon size={10} box={10}><path d="M3.500 .5 h3 v3 h3 v3 h-3 v3 h-3 v-3 h-3 v-3 h3 Z" fill="#fff" stroke="#777" /></Icon></ViewTab>
          </ViewTabs>
        </ViewArea>
        <Layers />
      </Main>
      <StatusBar>打开已存在的模型</StatusBar>
      <FileMenu />
      <Badge $x={104} $y={-3}>1</Badge>
      <Badge $x={246} $y={104}>2</Badge>
      <Notes width="260" height="130" fill="#ff1200" aria-hidden="true">
        <path d="M88 18 L50 33" stroke="#ff1200" strokeWidth="6" strokeLinecap="round" />
        <path d="M36 37 L51 22 L50 31 L60 39 Z" />
        <path d="M226 113 L112 93" stroke="#ff1200" strokeWidth="6" strokeLinecap="round" />
        <path d="M99 89 L120 82 L115 92 L117 101 Z" />
      </Notes>
    </Window>
  );
}
